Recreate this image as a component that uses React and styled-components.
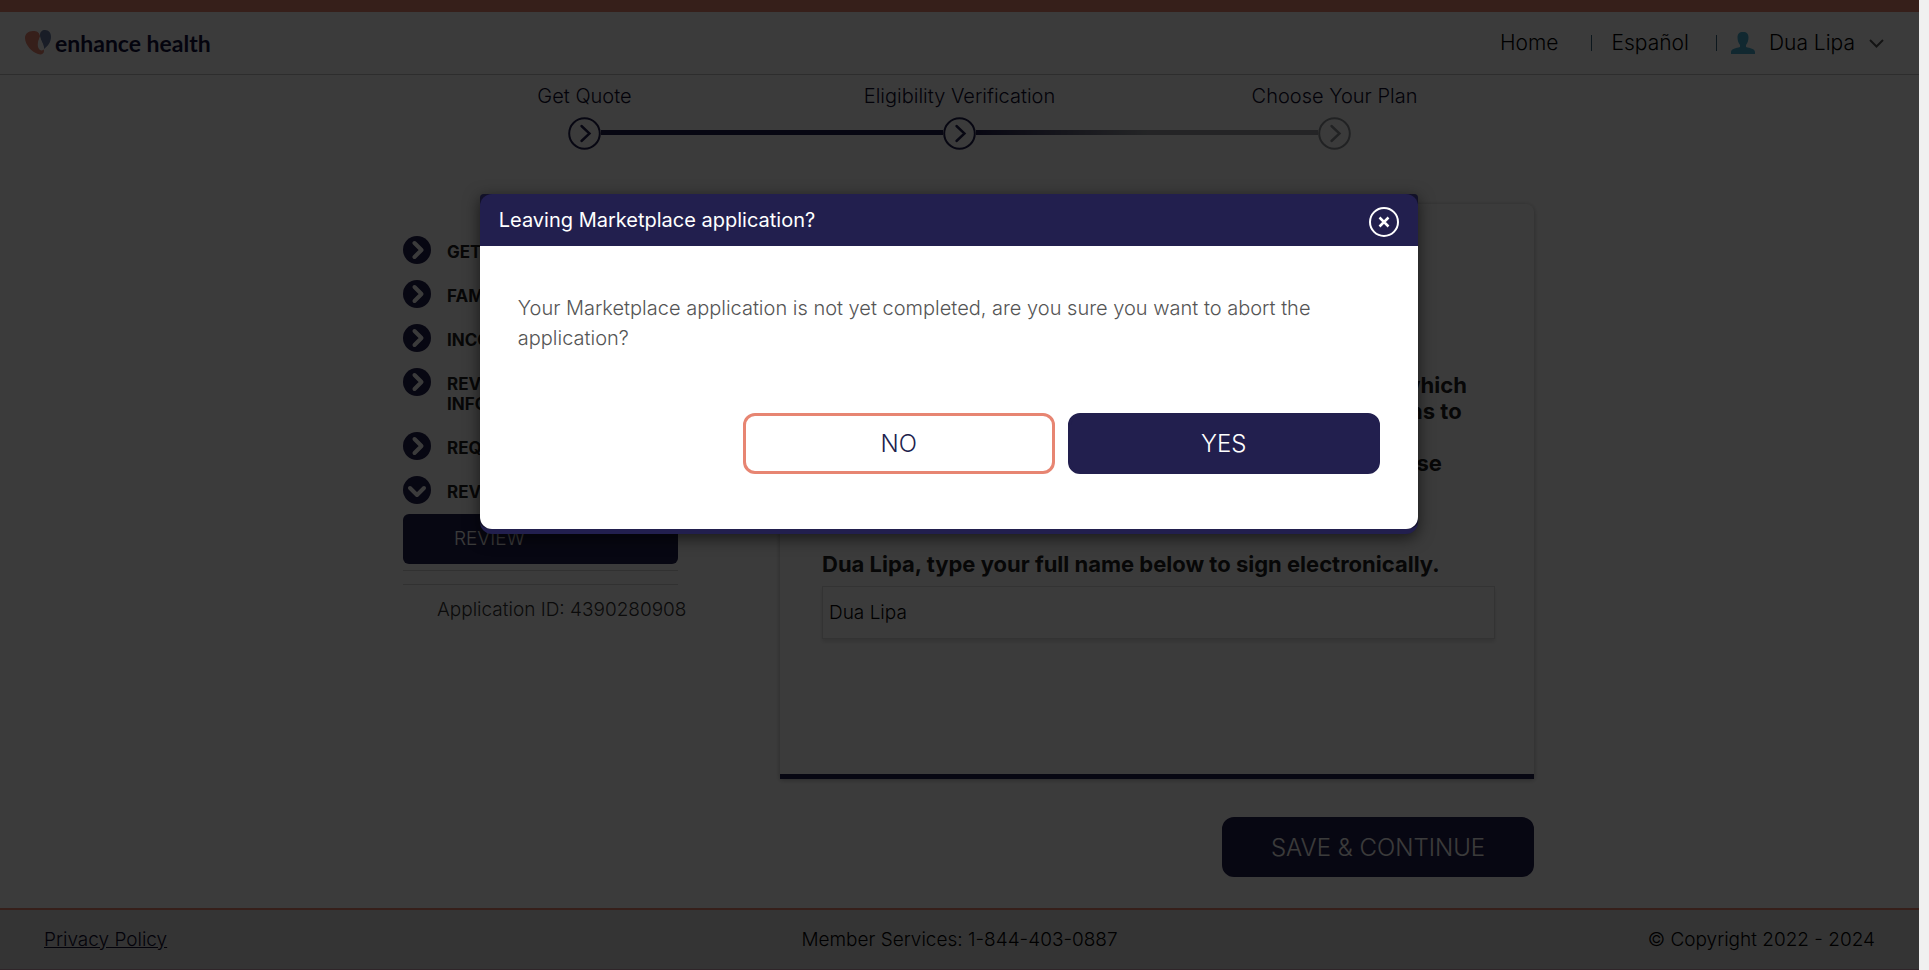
import React from 'react';
import styled, { createGlobalStyle } from 'styled-components';

const navy = '#221f4e';
const coral = '#e78572';

const GlobalStyle = createGlobalStyle`
  * { box-sizing: border-box; }
  body {
    margin: 0;
    background: #fff;
    color: #222;
    font-family: Inter, "Open Sans", "Liberation Sans", sans-serif;
    font-size: 19px;
    font-weight: 300;
  }
  button, input { font: inherit; }
  h2, p, ol, ul { margin: 0; padding: 0; }
  ol, ul { list-style: none; }
`;

const Shell = styled.div`
  display: grid;
  grid-template-columns: minmax(0, 1fr) 10px;
  min-height: 100vh;
`;

const ScrollTrack = styled.div`
  background: #f0f0f0;
`;

const Page = styled.div`
  position: relative;
  display: flex;
  flex-direction: column;
`;

const Header = styled.header`
  display: flex;
  align-items: center;
  justify-content: space-between;
  height: 75px;
  padding: 0 35px 0 25px;
  border-top: 12px solid ${coral};
  border-bottom: 1px solid #c4c4c4;
`;

const Logo = styled.a`
  display: flex;
  align-items: center;
  gap: 3px;
  color: #15123f;
  font-family: Lato, "Open Sans", sans-serif;
  font-size: 23px;
  font-weight: 700;
  line-height: 26px;
  text-decoration: none;
`;

const Nav = styled.nav`
  display: flex;
  align-items: center;
`;

const NavLink = styled.a`
  color: #000;
  font-size: 21px;
  line-height: 24px;
  text-decoration: none;
`;

const Divider = styled.span`
  width: 1px;
  height: 16px;
  margin: 0 ${(p) => p.$after}px 0 ${(p) => p.$before}px;
  background: #34657c;
`;

const UserButton = styled.button`
  display: flex;
  align-items: center;
  gap: 14px;
  padding: 0;
  border: 0;
  background: none;
  color: #000;
  font-size: 21px;
  line-height: 24px;
`;

const Stepper = styled.section`
  display: flex;
  flex-direction: column;
  align-items: center;
  gap: 9px;
  padding-top: 9px;
`;

const StepLabels = styled.ol`
  display: grid;
  grid-template-columns: repeat(3, 1fr);
  width: 100%;
  max-width: 1125px;
  color: #0d0b2c;
  font-size: 20px;
  line-height: 24px;
  text-align: center;
`;

const StepTrack = styled.div`
  display: flex;
  align-items: center;
  width: 100%;
  max-width: 783px;
`;

const StepLine = styled.span`
  flex: 1;
  height: 5px;
  margin-bottom: 2px;
  background: ${(p) => (p.$fading ? `linear-gradient(90deg, ${navy}, #9a9da3 50%)` : navy)};
`;

const Main = styled.main`
  flex: 1;
  width: 100%;
  max-width: 1149px;
  margin: 0 auto;
  padding: 54px 0 31px 18px;
`;

const Columns = styled.div`
  display: grid;
  grid-template-columns: 275px minmax(0, 754px);
  justify-content: space-between;
`;

const Sidebar = styled.aside`
  padding-top: 32px;
`;

const SectionList = styled.ul`
  display: flex;
  flex-direction: column;
  gap: 16px;
`;

const SectionItem = styled.li`
  display: flex;
  gap: 16px;
  color: #222;
  font-size: 17px;
  font-weight: 700;
  line-height: 20px;

  svg { flex: none; }
  span { padding: 6px 0 2px; }
`;

const ActiveSection = styled.a`
  display: block;
  margin: 10px 0 6px;
  padding: 0 51px;
  border-radius: 6px;
  background: ${navy};
  color: #fff;
  line-height: 50px;
  text-decoration: none;
`;

const ApplicationId = styled.p`
  padding: 12px 0 0 34px;
  border-top: 1px solid #d5d5d5;
  color: #333;
  line-height: 26px;
  white-space: nowrap;
`;

const Rule = styled.hr`
  height: 1px;
  margin: 0 0 13px;
  border: 0;
  background: #d5d5d5;
`;

const Card = styled.section`
  min-height: 575px;
  padding: 168px 39px 40px 42px;
  border: solid ${navy};
  border-width: 0 0 5px;
  border-radius: 8px 8px 0 0;
  box-shadow: 0 1px 5px rgba(0, 0, 0, 0.3);
  font-size: 22px;
  font-weight: 700;
  line-height: 26px;
`;

const Statement = styled.p`
  margin-bottom: 49px;
  padding-left: 14px;

  span { display: block; white-space: nowrap; }
`;

const SignatureLabel = styled.label`
  display: block;
  margin-bottom: 9px;
  white-space: nowrap;
`;

const SignatureInput = styled.input`
  display: block;
  width: 100%;
  height: 53px;
  padding: 0 6px;
  border: 1px solid #ddd;
  box-shadow: 0 3px 4px rgba(0, 0, 0, 0.12);
  background: #fff;
  color: #000;
  font-size: 19px;
  font-weight: 300;
`;

const Actions = styled.div`
  display: flex;
  justify-content: flex-end;
  gap: 13px;
  margin-top: ${(p) => p.$top}px;
`;

const Button = styled.button`
  width: 312px;
  height: ${(p) => (p.$tall ? 61 : 60)}px;
  border: 3px solid ${(p) => (p.$outline ? coral : navy)};
  border-radius: 12px;
  background: ${(p) => (p.$outline ? '#fff' : navy)};
  color: ${(p) => (p.$outline ? navy : '#fff')};
  font-size: 24px;
`;

const Footer = styled.footer`
  display: grid;
  grid-template-columns: 1fr auto 1fr;
  align-items: center;
  height: 62px;
  padding: 0 44px;
  border-top: 2px solid ${coral};
  border-bottom: 1px solid #c9a0b0;
  background: #e0e0e0;
  color: #000;

  a { justify-self: start; color: #0d0b2c; }
  span:last-child { justify-self: end; }
`;

const Overlay = styled.div`
  position: absolute;
  inset: 0;
  padding: 194px 20px 0 25%;
  background: rgba(0, 0, 0, 0.77);
`;

const Dialog = styled.div`
  width: 100%;
  max-width: 938px;
  border-bottom: 5px solid ${navy};
  border-radius: 4px 4px 12px 12px;
  background: #121128;
  box-shadow: 0 4px 16px rgba(0, 0, 0, 0.6);
`;

const DialogHeader = styled.header`
  display: flex;
  align-items: center;
  justify-content: space-between;
  height: 52px;
  padding: 0 19px;
  border-radius: 12px 12px 0 0;
  background: ${navy};
  color: #fff;

  h2 { font-size: 20px; font-weight: 400; line-height: 26px; }
`;

const CloseButton = styled.button`
  display: grid;
  place-items: center;
  width: 30px;
  height: 30px;
  margin-top: 4px;
  padding: 0;
  border: 2px solid #fff;
  border-radius: 50%;
  background: none;
  color: #fff;
`;

const DialogBody = styled.div`
  padding: 47px 38px 55px;
  border-radius: 0 0 12px 12px;
  background: #fff;
  color: #555;
  font-size: 20px;
  line-height: 30px;
`;

const DialogText = styled.p`
  max-width: 830px;
`;

function LogoMark() {
  return (
    <svg width="27" height="26" viewBox="0 0 27 26" aria-hidden="true">
      <path d="M8 1C3 1 0 4 0 8c0 7 7 14 13 16 3 1 6 0 6-3 0-2-1-2-3-2-3-1-3-5-2-9l1-4C14 2 12 1 8 1Z" fill={coral} />
      <path d="M20 0c-3 0-5 2-5 5 0 4 3 9 4 14 4-3 7-7 7-12 0-4-2-7-6-7Z" fill="#6d7fa8" />
      <path d="M15 7c-3 5-3 11 0 13 2 1 4 0 4-2 0-4-3-7-4-11Z" fill="#fff" />
    </svg>
  );
}

function UserIcon() {
  return (
    <svg width="24" height="22" viewBox="0 0 24 22" aria-hidden="true">
      <path
        d="M12 0c4 0 5.500 2 5.500 5.500 0 3.500-1 5.500-2.500 7.500v2c4 1 9 2 9 5v2H0v-2c0-3 5-4 9-5v-2C7.500 11 6.500 9 6.500 5.500 6.500 2 8 0 12 0Z"
        fill="#4aaed0"
      />
    </svg>
  );
}

function StepIcon({ muted }) {
  const stroke = muted ? '#8f9298' : navy;
  return (
    <svg width="33" height="33" viewBox="0 0 33 33" fill="none" stroke={stroke} strokeWidth="2" aria-hidden="true">
      <circle cx="16.5" cy="16.5" r="15.3" />
      <path d="m13.5 9 8 7.500-8 7.500" strokeWidth="2.4" strokeLinecap="round" />
    </svg>
  );
}

function SectionIcon({ open }) {
  return (
    <svg width="28" height="28" viewBox="0 0 28 28" aria-hidden="true">
      <circle cx="14" cy="14" r="14" fill={navy} />
      <path
        d={open ? 'm7 12 7 7 7-7' : 'm11.500 7 7 7-7 7'}
        fill="none"
        stroke="#fff"
        strokeWidth="4"
        strokeLinecap="round"
        strokeLinejoin="round"
      />
    </svg>
  );
}

const sections = [
  { lines: ['GET STARTED'] },
  { lines: ['FAMILY'] },
  { lines: ['INCOME'] },
  { lines: ['REVIEW', 'INFORMATION'] },
  { lines: ['REQUIRED'] },
  { lines: ['REVIEW'], open: true },
];

const statement = [
  "I'm signing this application under penalty of perjury, which",
  "means I've provided true answers to all of the questions to",
  'the best of my knowledge. I know I may be subject to',
  'penalties under federal law if I intentionally provide false',
  'or untrue information.',
];

export default function App() {
  return (
    <Shell>
      <GlobalStyle />
      <Page>
        <Header>
          <Logo href="#home">
            <LogoMark />
            enhance health
          </Logo>
          <Nav>
            <NavLink href="#home">Home</NavLink>
            <Divider $before={32} $after={20} />
            <NavLink href="#es">Español</NavLink>
            <Divider $before={27} $after={14} />
            <UserButton type="button">
              <UserIcon />
              Dua Lipa
              <svg width="15" height="9" viewBox="0 0 15 9" fill="none" stroke="#555" strokeWidth="2" aria-hidden="true">
                <path d="m1 1 6.500 6.500L14 1" />
              </svg>
            </UserButton>
          </Nav>
        </Header>

        <Stepper>
          <StepLabels>
            <li>Get Quote</li>
            <li>Eligibility Verification</li>
            <li>Choose Your Plan</li>
          </StepLabels>
          <StepTrack>
            <StepIcon />
            <StepLine />
            <StepIcon />
            <StepLine $fading />
            <StepIcon muted />
          </StepTrack>
        </Stepper>

        <Main>
          <Columns>
            <Sidebar>
              <SectionList>
                {sections.map((section, i) => (
                  <SectionItem key={i}>
                    <SectionIcon open={section.open} />
                    <span>
                      {section.lines.map((line, n) => (
                        <React.Fragment key={line}>
                          {n > 0 && <br />}
                          {line}
                        </React.Fragment>
                      ))}
                    </span>
                  </SectionItem>
                ))}
              </SectionList>
              <ActiveSection href="#review">REVIEW</ActiveSection>
              <Rule />
              <ApplicationId>Application ID: 4390280908</ApplicationId>
            </Sidebar>
            <Card>
              <Statement>
                {statement.map((line) => (
                  <span key={line}>{line}</span>
                ))}
              </Statement>
              <SignatureLabel htmlFor="signature">
                Dua Lipa, type your full name below to sign electronically.
              </SignatureLabel>
              <SignatureInput id="signature" type="text" defaultValue="Dua Lipa" />
            </Card>
          </Columns>
          <Actions $top={38}>
            <Button type="button">SAVE &amp; CONTINUE</Button>
          </Actions>
        </Main>

        <Footer>
          <a href="#privacy">Privacy Policy</a>
          <span>Member Services: 1-844-403-0887</span>
          <span>© Copyright 2022 - 2024</span>
        </Footer>

        <Overlay>
          <Dialog role="dialog" aria-modal="true" aria-labelledby="leave-title">
            <DialogHeader>
              <h2 id="leave-title">Leaving Marketplace application?</h2>
              <CloseButton type="button" aria-label="Close">
                <svg width="12" height="12" viewBox="0 0 12 12" stroke="#fff" strokeWidth="2.500" aria-hidden="true">
                  <path d="m1.500 1.500 9 9m0-9-9 9" />
                </svg>
              </CloseButton>
            </DialogHeader>
            <DialogBody>
              <DialogText>
                Your Marketplace application is not yet completed, are you sure you want to abort the application?
              </DialogText>
              <Actions $top={60}>
                <Button type="button" $outline $tall>NO</Button>
                <Button type="button" $tall>YES</Button>
              </Actions>
            </DialogBody>
          </Dialog>
        </Overlay>
      </Page>
      <ScrollTrack />
    </Shell>
  );
}
